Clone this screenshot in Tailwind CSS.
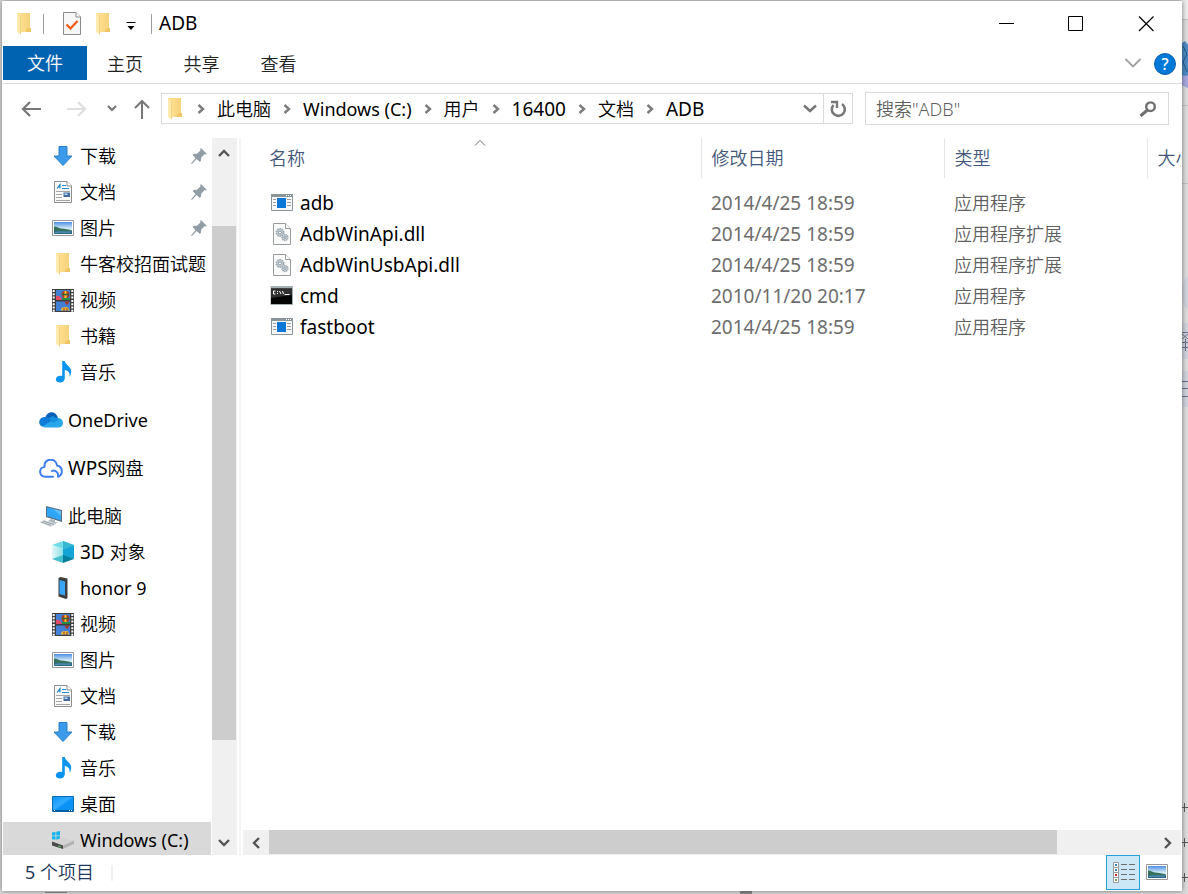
<!DOCTYPE html>
<html lang="zh-CN">
<head>
<meta charset="utf-8">
<meta name="viewport" content="width=device-width, initial-scale=1">
<title>ADB</title>
<script src="https://cdn.jsdelivr.net/npm/@tailwindcss/browser@4"></script>
</head>
<body class="relative flex h-screen overflow-hidden bg-[#dcdcdc] pt-px pr-[6px] pb-[3px] pl-[2px] font-['Noto_Sans','Noto_Sans_CJK_SC',sans-serif] text-[18px] leading-6 font-[350] text-black">

<svg class="absolute size-0" aria-hidden="true">
  <defs>
    <linearGradient id="gFold" x1="0" x2="1"><stop offset="0" stop-color="#ffe394"/><stop offset="1" stop-color="#f7d27c"/></linearGradient>
    <linearGradient id="gSky" x1="0" y1="0" x2="0" y2="1"><stop offset="0" stop-color="#4f8fe6"/><stop offset=".55" stop-color="#d5ecf7"/><stop offset="1" stop-color="#e8f4f4"/></linearGradient>
    <linearGradient id="gBlue" x1="0" y1="0" x2="1" y2="1"><stop offset="0" stop-color="#0a93f5"/><stop offset=".45" stop-color="#33abff"/><stop offset=".55" stop-color="#0a93f5"/><stop offset="1" stop-color="#0a93f5"/></linearGradient>
    <linearGradient id="gCube" x1="0" x2="1"><stop offset="0" stop-color="#e2f8f9"/><stop offset="1" stop-color="#8fe0e6"/></linearGradient>
    <symbol id="folder" viewBox="0 0 16 22"><path d="M4 0h10v15h1v4H4z" fill="#f3cd73"/><path d="M1 0h12.500v16H14v3H5z" fill="url(#gFold)"/><path d="M10 19v-3l3-1h2v4z" fill="#f0c566"/><path d="M1 .500 5 4v17.500L1 19z" fill="#ffe9ab"/><path d="M5 4v17.500l-.800-.500V3.300z" fill="#eecb78"/></symbol>
    <symbol id="down" viewBox="0 0 20 20"><path d="M6 .500h8v9.500h5L10 19.500 1 10h5z" fill="#3b9bea" stroke="#2b7fc8"/></symbol>
    <symbol id="doc" viewBox="0 0 18 22"><path d="M.500.500h12.500l4.500 4.500v16.500h-17z" fill="#fafafa" stroke="#8b8f92"/><path d="M13 .500V5h4.500" fill="#fff" stroke="#8b8f92"/><path d="M3 7.500 6 3.500v4M4.500 6H6M8 4.500h4M8 7.500h7" fill="none" stroke="#1f8bd0" stroke-width="1.200"/><path d="M2 10.500h14M2 13.500h6M2 16.500h6M2 19.500h14" stroke="#a6a6a6"/><path d="M9.500 11.500H16V16H9.500z" fill="#3d6c9c"/><path d="M10.500 12.500h3v1.500h-3z" fill="#bde0f2"/></symbol>
    <symbol id="picture" viewBox="0 0 22 16"><path d="M.500.500h21v15H.500z" fill="#fff" stroke="#979797"/><path d="M2 2h18v12H2z" fill="url(#gSky)"/><path d="M2 6.500c3 0 4 1.500 7 2 4 .500 8 .500 11 2v1H2z" fill="#38715b"/><path d="M2 11h18v3H2z" fill="#276888"/><path d="M3 12.500c4-1 9 0 16-.500" stroke="#6ba0bd" fill="none"/></symbol>
    <symbol id="video" viewBox="0 0 22 23"><path d="M0 0h22v23H0z" fill="#3d3d3d"/><path d="M4 1h14v10H4zM4 12.500h14V22H4z" fill="#4180d5"/><path d="M1.700 1v22M20.300 1v22" stroke="#fff" stroke-width="2" stroke-dasharray="2 1.300"/><ellipse cx="13.500" cy="5.500" rx="4" ry="3.700" fill="#b23a20"/><path d="M12.500 2h2v7h-2z" fill="#ffcb2c"/><path d="M10 5.500h7" stroke="#2f6a38" stroke-width="1.500"/><path d="M4 7c3-1 5 1 6 4H4z" fill="#e04c68"/><path d="M10 9h8v2h-8z" fill="#268b45"/><path d="M12.500 12.500h5l-1.500 3h-2z" fill="#a93727"/><path d="M9 21.500q.500-4 3-3 2-1 4 0l1.500 3z" fill="#f6b62c"/><path d="M12 19v3M15 19v3" stroke="#8b3e30"/></symbol>
    <symbol id="music" viewBox="0 0 18 22"><path d="M8.200 0h2.600c.500 4 6.700 5.500 6.400 11-.1 2-1 4-1.700 5 .500-4-.500-6-4.700-7v8c0 6-9 5.500-9 1.500 0-3.500 3.700-4.500 6.400-3.500z" fill="#0a94ee"/></symbol>
    <symbol id="onedrive" viewBox="0 0 24 16"><path d="M6 6C9-2 17-1 19 6l-6 5z" fill="#0561b8"/><path d="M5 15C-2 14-1 5 6 5c3 0 5 1 8 3.500L6 15z" fill="#0f7bd6"/><path d="M3 14.500 18 6c7-1 8 9 2 9.500H6z" fill="#28a8ea"/><path d="m10 6 4-2 6 4-6 3z" fill="#1490df"/></symbol>
    <symbol id="wps" viewBox="0 0 24 19"><path d="M14 17.800H6.500C-.500 17.500-.500 8.500 5.500 8 4.500-1 17-2 18 6.500c6 1 6.500 9.500 1 11.200 1-4-3-7.500-6-5.700" fill="none" stroke="#3d7df2" stroke-width="2" stroke-linecap="round" stroke-linejoin="round"/></symbol>
    <symbol id="pc" viewBox="0 0 24 21"><path d="m7 0 16 4v12L7 11z" fill="#596e7d"/><path d="m8 1.300 14 3.500v9.700L8 10z" fill="#2fa5f5"/><path d="m14 3 8 2v5z" fill="#62bdff"/><path d="m12 13 4 1v2h3l-3 2-7-3z" fill="#aeb9bf"/><path d="m0 16 5-2 12 4-5 3z" fill="#d9dfe3"/><path d="m2 16 10 3.500M4 15l11 3.500" stroke="#929ea6"/></symbol>
    <symbol id="cube" viewBox="0 0 22 22"><path d="m11 0 11 4-11 4L0 4z" fill="#72dce8"/><path d="m11 0 11 4-11 4z" fill="#35b8cf"/><path d="m0 4 11 4v7L0 18z" fill="url(#gCube)"/><path d="m22 4-11 4v7l11 3z" fill="#12a4d5"/><path d="m0 18 11-4v8z" fill="#45c0ce"/><path d="m22 18-11-4v8z" fill="#067f9b"/></symbol>
    <symbol id="phone" viewBox="0 0 11 22"><path d="M1 1 3 0l7 1.500V21l-1.500 1L1 19.500z" fill="#3e3e3e"/><path d="m2 3 5.500 1.500v14L2 17z" fill="#37a6f8"/></symbol>
    <symbol id="desktop" viewBox="0 0 22 16"><path d="M.500.500h21v15H.500z" fill="url(#gBlue)" stroke="#086bb6"/><path d="M1 14h20v1.500H1z" fill="#075a9e"/><path d="M2 14.500h1M17 14.500h1M19 14.500h1" stroke="#fff"/></symbol>
    <symbol id="drive" viewBox="0 0 22 18"><path d="M0 1.500 3.500 1v3.500H0zM4.300.800 8 0v4.500H4.300zM0 5.300h3.500v3.500L0 8.300zM4.300 5.300H8v4l-3.700-.500z" fill="#11b4ee"/><path d="m0 10.500 9-3.500L22 9.500l-11 5z" fill="#d3d3d3"/><path d="m0 10.500 11 4v3.500L0 14.500z" fill="#4a4a4a"/><path d="m11 14.500 11-5v3.500l-11 5z" fill="#b4b4b4"/><path d="m6 14.500 3 1v1l-3-1z" fill="#54cf5a"/></symbol>
    <symbol id="pin" viewBox="0 0 16 16"><path d="m10 0 6 6-1.500.500-1-.500-3.500 4c.500 1.500 0 3-1 4L5.500 11 1 16l-1-.500L4.500 10 1.500 7c1-1 2.500-1.500 4-1l4-3.500-.500-1z" fill="#929ea6"/></symbol>
    <symbol id="app" viewBox="0 0 22 17"><path d="M.500.500h21v16H.500z" fill="#f7f7f7" stroke="#89949b"/><path d="M0 0h22v3H0z" fill="#89949b"/><path d="M15 1.500h1M17 1.500h1M19 1.500h1" stroke="#fff"/><path d="M6 4h9v10H6z" fill="#0b78d9"/><path d="M2 5.500h3M2 8.500h3M2 11.500h3M16 5.500h4M16 8.500h4M16 11.500h4" stroke="#9b9b9b"/></symbol>
    <symbol id="dll" viewBox="0 0 18 22"><path d="M.500.500h12l5 5v16H.500z" fill="#fafafa" stroke="#969b9e"/><path d="M12.500.500v5h5" fill="#fff" stroke="#969b9e"/><circle cx="7" cy="9.500" r="3.500" fill="#dce3e6" stroke="#98a5ad" stroke-width="2" stroke-dasharray="1.500 .700"/><circle cx="7" cy="9.500" r="1.500" fill="#fff" stroke="#7f909b"/><circle cx="12" cy="14.500" r="2.800" fill="#dce3e6" stroke="#98a5ad" stroke-width="1.700" stroke-dasharray="1.300 .600"/><circle cx="12" cy="14.500" r="1" fill="#fff" stroke="#7f909b"/></symbol>
    <symbol id="cmd" viewBox="0 0 23 19"><path d="M0 0h22.500v19H0z" fill="#a5b0b5"/><path d="M.500 2.500h21V18H.500z" fill="#050505"/><path d="M.500 2.500h21V9L.500 12z" fill="#303030"/><path d="M5 5H3v3h2M7 5v1M7 7v1M9 5l1.500 3M12 5l1 3M14 8.500h5" stroke="#fff" fill="none"/></symbol>
    <symbol id="chev" viewBox="0 0 8 10"><path d="m1.500 1 4.500 4-4.500 4" fill="none" stroke="#7c7c7c" stroke-width="2.400"/></symbol>
  </defs>
</svg>

<!-- strips of the desktop that show around the window -->
<svg class="absolute top-0 right-0 h-[894px] w-[6px]" viewBox="0 0 6 894" aria-hidden="true">
  <path d="M0 0h6v19H0z" fill="#ededed"/><path d="M0 19.500h6M0 105.500h6M0 183.500h6" stroke="#c3c3c3"/>
  <path d="M0 43 3 41l3 4v43l-6-3z" fill="#4d8ac4"/><path d="m1 46 4 8-4 8 4 10" stroke="#235985" fill="none"/><path d="M0 75q4 2 6 0v13l-6-3z" fill="#a8a9de"/>
  <path d="M6 277q-6 2-6 16t6 16zM0 323h6v36H0zM0 371h6v36H0z" fill="#cfd3dc"/>
  <path d="M0 332.500h6M0 334l6 5M6 334l-6 5M0 342.500h6M0 347.500h6M3.500 339v12M0 381.500h6M0 388.500h6M0 396.500h6" stroke="#6c7190" fill="none"/>
  <path d="M0 807.500h6M2.500 803v9M0 842.500h6M2.500 838v9M0 877.500h6M2.500 873v9" stroke="#5b5b5b"/>
</svg>
<svg class="absolute bottom-0 left-[45px] h-[3px] w-[710px]" viewBox="0 0 710 3" aria-hidden="true"><path d="M0 1h22v1H0zM695 0h12v3h-12z" fill="#8a8a8a"/></svg>

<main class="relative flex min-w-0 flex-1 flex-col bg-white pl-px shadow-[0_0_5px_rgba(0,0,0,0.5)]">
  <header class="flex h-[45px] shrink-0 items-center">
    <svg class="ml-[13px] h-[22px] w-4"><use href="#folder"/></svg>
    <span class="ml-[11px] h-5 w-px bg-[#9a9a9a]"></span>
    <button class="ml-[19px]" aria-label="属性"><svg class="h-[23px] w-[18px]" viewBox="0 0 18 23"><path d="M.500.500h12.500l4.500 4.500v17.500H.500z" fill="#f7f7f7" stroke="#8b8b8b"/><path d="M13 .500V5h4.500" fill="#fff" stroke="#8b8b8b"/><path d="m3.500 12.500 4 4 7-7.500" fill="none" stroke="#f2570f" stroke-width="2.200"/></svg></button>
    <button class="ml-[14px]" aria-label="新建文件夹"><svg class="h-[22px] w-4"><use href="#folder"/></svg></button>
    <button class="ml-[15px]" aria-label="自定义快速访问工具栏"><svg class="mt-1 h-2 w-[10px]" viewBox="0 0 10 8"><path d="M.500.500h9" stroke="#000"/><path d="M1.500 4h7L5 8z"/></svg></button>
    <span class="ml-[15px] h-5 w-px bg-[#9a9a9a]"></span>
    <h1 class="ml-[7px] pb-[2px] text-[19px] font-normal">ADB</h1>
    <div class="mr-px ml-auto flex h-full">
      <button class="flex w-[70px] items-center justify-center" aria-label="最小化"><svg class="size-4" viewBox="0 0 16 16"><path d="M1 7.500h15" stroke="#000"/></svg></button>
      <button class="flex w-[70px] items-center justify-center" aria-label="最大化"><svg class="size-4" viewBox="0 0 16 16"><path d="M.500.500h14v14H.500z" fill="none" stroke="#000"/></svg></button>
      <button class="flex w-[70px] items-center justify-center" aria-label="关闭"><svg class="size-4" viewBox="0 0 16 16"><path d="m1 .500 14.500 14.500M15.500.500 1 15" stroke="#000" stroke-width="1.200"/></svg></button>
    </div>
  </header>

  <nav class="flex h-[38px] shrink-0 border-b border-[#dadbdc] text-[#222]">
    <button class="mb-[3px] w-[84px] bg-[#0063b1] text-white">文件</button>
    <button class="w-[76px] pb-px">主页</button>
    <button class="w-[77px] pb-px">共享</button>
    <button class="w-[77px] pb-px">查看</button>
    <button class="mr-3 mb-[3px] ml-auto" aria-label="展开功能区"><svg class="h-[10px] w-[18px]" viewBox="0 0 18 10"><path d="m1.500 1 7.500 7.500L16.500 1" fill="none" stroke="#a0a0a0" stroke-width="1.800"/></svg></button>
    <button class="mt-[7px] mr-[6px] flex size-[22px] items-center justify-center rounded-full border border-[#0f5fae] bg-[#0078d7] text-base leading-none font-medium text-white" aria-label="帮助">?</button>
  </nav>

  <section class="flex h-[49px] shrink-0 items-center pr-[13px]" aria-label="导航">
    <button class="ml-[18px]" aria-label="后退"><svg class="h-4 w-5" viewBox="0 0 20 16"><path d="M20 8H2m7-7L2 8l7 7" fill="none" stroke="#777" stroke-width="2.200"/></svg></button>
    <button class="ml-[26px]" aria-label="前进"><svg class="h-4 w-5" viewBox="0 0 20 16"><path d="M0 8h18m-7-7 7 7-7 7" fill="none" stroke="#dedede" stroke-width="2.200"/></svg></button>
    <button class="ml-5" aria-label="最近位置"><svg class="h-[7px] w-[10px]" viewBox="0 0 10 7"><path d="m1 1 4 4 4-4" fill="none" stroke="#777" stroke-width="2.200"/></svg></button>
    <button class="ml-[17px]" aria-label="上移"><svg class="h-5 w-4" viewBox="0 0 16 20"><path d="M8 20V2M1 9l7-7 7 7" fill="none" stroke="#777" stroke-width="2"/></svg></button>
    <div class="ml-[11px] flex h-[31px] min-w-0 flex-1 items-center border border-[#d9d9d9]">
      <svg class="ml-[5px] h-[22px] w-4 shrink-0"><use href="#folder"/></svg>
      <div class="ml-[14px] flex min-w-0 items-center gap-3 overflow-hidden whitespace-nowrap">
        <svg class="h-[10px] w-2 shrink-0"><use href="#chev"/></svg><button>此电脑</button>
        <svg class="h-[10px] w-2 shrink-0"><use href="#chev"/></svg><button class="font-normal">Windows (C:)</button>
        <svg class="h-[10px] w-2 shrink-0"><use href="#chev"/></svg><button>用户</button>
        <svg class="h-[10px] w-2 shrink-0"><use href="#chev"/></svg><button class="text-[19px] font-normal">16400</button>
        <svg class="h-[10px] w-2 shrink-0"><use href="#chev"/></svg><button>文档</button>
        <svg class="h-[10px] w-2 shrink-0"><use href="#chev"/></svg><button class="text-[19px] font-normal">ADB</button>
      </div>
      <button class="mr-[6px] ml-auto" aria-label="以前的位置"><svg class="h-[9px] w-[14px]" viewBox="0 0 14 9"><path d="m1 1.500 6 5.500 6-5.500" fill="none" stroke="#777" stroke-width="2.400"/></svg></button>
      <button class="flex h-full w-[29px] items-center justify-center border-l border-[#d9d9d9]" aria-label="刷新"><svg class="h-[18px] w-[17px]" viewBox="0 0 17 18"><path d="M12 4a6.500 6.500 0 1 1-8.500 1" fill="none" stroke="#777" stroke-width="2.600"/><path d="M1 2h6v6" fill="none" stroke="#777" stroke-width="2.400"/></svg></button>
    </div>
    <label class="ml-3 flex h-[33px] w-[304px] items-center border border-[#d9d9d9] pr-[11px] pl-[10px]">
      <input class="min-w-0 flex-1 bg-transparent font-normal outline-none placeholder:font-[350] placeholder:text-[#5f5f5f]" type="text" placeholder="搜索&quot;ADB&quot;" aria-label="搜索">
      <svg class="h-4 w-[18px]" viewBox="0 0 18 16"><circle cx="11.500" cy="5.700" r="4.300" fill="none" stroke="#6f6f6f" stroke-width="2.400"/><path d="m8.500 9-7 6" stroke="#6f6f6f" stroke-width="3"/></svg>
    </label>
  </section>

  <div class="flex min-h-0 flex-1 pt-[5px]">
    <ul class="w-[208px] shrink-0 overflow-hidden whitespace-nowrap">
      <li class="flex h-9 items-center pl-12"><svg class="mr-[5px] size-6 p-[2px]"><use href="#down"/></svg>下载<svg class="mr-[4px] ml-auto size-4"><use href="#pin"/></svg></li>
      <li class="flex h-9 items-center pl-12"><svg class="mr-[5px] h-[22px] w-6"><use href="#doc"/></svg>文档<svg class="mr-[4px] ml-auto size-4"><use href="#pin"/></svg></li>
      <li class="flex h-9 items-center pl-12"><svg class="mr-[5px] h-4 w-6"><use href="#picture"/></svg>图片<svg class="mr-[4px] ml-auto size-4"><use href="#pin"/></svg></li>
      <li class="flex h-9 items-center pl-12"><svg class="mr-[5px] h-[22px] w-6 shrink-0"><use href="#folder"/></svg>牛客校招面试题</li>
      <li class="flex h-9 items-center pl-12"><svg class="mr-[5px] h-[23px] w-6"><use href="#video"/></svg>视频</li>
      <li class="flex h-9 items-center pl-12"><svg class="mr-[5px] h-[22px] w-6"><use href="#folder"/></svg>书籍</li>
      <li class="flex h-9 items-center pl-12"><svg class="mr-[5px] h-[22px] w-6"><use href="#music"/></svg>音乐</li>
      <li class="mt-3 flex h-9 items-center pl-9"><svg class="mr-[5px] h-4 w-6"><use href="#onedrive"/></svg><span class="font-normal">OneDrive</span></li>
      <li class="mt-3 flex h-9 items-center pl-9"><svg class="mr-[5px] h-[19px] w-6"><use href="#wps"/></svg><span><span class="text-[19px] font-normal">WPS</span>网盘</span></li>
      <li class="mt-3 flex h-9 items-center pl-9"><svg class="mr-[5px] h-[21px] w-6"><use href="#pc"/></svg>此电脑</li>
      <li class="flex h-9 items-center pl-12"><svg class="mr-[5px] h-[22px] w-6"><use href="#cube"/></svg><span><span class="text-[19px] font-normal">3D </span>对象</span></li>
      <li class="flex h-9 items-center pl-12"><svg class="mr-[5px] h-[22px] w-6"><use href="#phone"/></svg><span class="font-normal">honor 9</span></li>
      <li class="flex h-9 items-center pl-12"><svg class="mr-[5px] h-[23px] w-6"><use href="#video"/></svg>视频</li>
      <li class="flex h-9 items-center pl-12"><svg class="mr-[5px] h-4 w-6"><use href="#picture"/></svg>图片</li>
      <li class="flex h-9 items-center pl-12"><svg class="mr-[5px] h-[22px] w-6"><use href="#doc"/></svg>文档</li>
      <li class="flex h-9 items-center pl-12"><svg class="mr-[5px] size-6 p-[2px]"><use href="#down"/></svg>下载</li>
      <li class="flex h-9 items-center pl-12"><svg class="mr-[5px] h-[22px] w-6"><use href="#music"/></svg>音乐</li>
      <li class="flex h-9 items-center pl-12"><svg class="mr-[5px] h-4 w-6"><use href="#desktop"/></svg>桌面</li>
      <li class="flex h-9 items-center bg-[#d9d9d9] pl-12"><svg class="mr-[5px] h-[18px] w-6"><use href="#drive"/></svg><span class="font-normal">Windows (C:)</span></li>
    </ul>
    <div class="ml-px flex w-[25px] shrink-0 flex-col bg-[#f0f0f0] pr-px">
      <button class="flex h-[30px] shrink-0 items-center justify-center" aria-label="向上滚动"><svg class="h-2 w-3" viewBox="0 0 12 8"><path d="m1 7 5-5 5 5" fill="none" stroke="#555" stroke-width="2.400"/></svg></button>
      <div class="flex flex-1 flex-col"><div class="grow-58"></div><div class="grow-514 bg-[#cdcdcd]"></div><div class="grow-90"></div></div>
      <button class="flex h-[25px] shrink-0 items-center justify-center" aria-label="向下滚动"><svg class="h-2 w-3" viewBox="0 0 12 8"><path d="m1 1 5 5 5-5" fill="none" stroke="#555" stroke-width="2.400"/></svg></button>
    </div>
    <div class="mr-[2px] ml-[2px] w-[2px] shrink-0 bg-[#f5f5f5]"></div>

    <section class="flex min-w-0 flex-1 flex-col pr-px" aria-label="文件">
      <table class="w-full table-fixed text-left whitespace-nowrap">
        <colgroup><col><col class="w-[243px]"><col class="w-[203px]"><col class="w-[34px]"></colgroup>
        <thead class="text-[#43587a]">
          <tr class="h-10">
            <th class="relative border-r border-[#e5e5e5] pl-[26px] font-[350]">名称<svg class="absolute top-[2px] left-[calc(50%+2px)] h-[6px] w-3" viewBox="0 0 12 6"><path d="m1 5.500 5-5 5 5" fill="none" stroke="#666"/></svg></th>
            <th class="border-r border-[#e5e5e5] pl-[10px] font-[350]">修改日期</th>
            <th class="border-r border-[#e5e5e5] pl-[10px] font-[350]">类型</th>
            <th class="overflow-hidden pl-[10px] font-[350]">大小</th>
          </tr>
        </thead>
        <tbody class="text-[#6d6d6d]">
          <tr class="h-[9px]"><td colspan="4" class="p-0"></td></tr>
          <tr class="h-[31px]"><td class="pl-[27px] text-[19px] font-normal text-black"><div class="flex items-center"><svg class="mr-[6px] h-[17px] w-6"><use href="#app"/></svg>adb</div></td><td class="pl-[10px] text-[19px] font-normal">2014/4/25 18:59</td><td class="pl-[10px] text-[#5f5f5f]">应用程序</td><td></td></tr>
          <tr class="h-[31px]"><td class="pl-[27px] text-[19px] font-normal text-black"><div class="flex items-center"><svg class="mr-[6px] h-[22px] w-6"><use href="#dll"/></svg>AdbWinApi.dll</div></td><td class="pl-[10px] text-[19px] font-normal">2014/4/25 18:59</td><td class="pl-[10px] text-[#5f5f5f]">应用程序扩展</td><td></td></tr>
          <tr class="h-[31px]"><td class="pl-[27px] text-[19px] font-normal text-black"><div class="flex items-center"><svg class="mr-[6px] h-[22px] w-6"><use href="#dll"/></svg>AdbWinUsbApi.dll</div></td><td class="pl-[10px] text-[19px] font-normal">2014/4/25 18:59</td><td class="pl-[10px] text-[#5f5f5f]">应用程序扩展</td><td></td></tr>
          <tr class="h-[31px]"><td class="pl-[27px] text-[19px] font-normal text-black"><div class="flex items-center"><svg class="mr-[6px] h-[19px] w-6"><use href="#cmd"/></svg>cmd</div></td><td class="pl-[10px] text-[19px] font-normal">2010/11/20 20:17</td><td class="pl-[10px] text-[#5f5f5f]">应用程序</td><td></td></tr>
          <tr class="h-[31px]"><td class="pl-[27px] text-[19px] font-normal text-black"><div class="flex items-center"><svg class="mr-[6px] h-[17px] w-6"><use href="#app"/></svg>fastboot</div></td><td class="pl-[10px] text-[19px] font-normal">2014/4/25 18:59</td><td class="pl-[10px] text-[#5f5f5f]">应用程序</td><td></td></tr>
        </tbody>
      </table>
      <div class="mt-auto flex h-[25px] shrink-0 bg-[#f0f0f0]">
        <button class="flex w-[26px] items-center justify-center" aria-label="向左滚动"><svg class="h-3 w-2" viewBox="0 0 8 12"><path d="M7 1 2 6l5 5" fill="none" stroke="#555" stroke-width="2.400"/></svg></button>
        <div class="flex flex-1 pb-px"><div class="grow-788 bg-[#cdcdcd]"></div><div class="grow-97"></div></div>
        <button class="flex w-[27px] items-center justify-center" aria-label="向右滚动"><svg class="h-3 w-2" viewBox="0 0 8 12"><path d="m1 1 5 5-5 5" fill="none" stroke="#555" stroke-width="2.400"/></svg></button>
      </div>
    </section>
  </div>

  <footer class="flex h-9 shrink-0 items-center pl-[22px] text-[#1e395b]">
    <p class="pb-[2px]"><span class="font-normal">5</span> 个项目</p>
    <span class="ml-[17px] h-4 w-[2px] bg-[#f0f0f0]"></span>
    <button class="mr-[6px] ml-auto flex h-[35px] w-[34px] items-center justify-center self-start border border-[#26a0da] bg-[#cce8f6] pl-[2px]" aria-label="详细信息">
      <svg class="h-[21px] w-[22px]" viewBox="0 0 22 21"><path d="M.500.500h5v5h-5zM.500 5.500h5v5h-5zM.500 10.500h5v5h-5zM.500 15.500h5v5h-5z" fill="#fff" stroke="#999"/><path d="M2 2h2v2H2zM2 7h2v2H2z" fill="#3580b4"/><path d="M2 12h2v2H2z" fill="#b72720"/><path d="M2 17h2v2H2z" fill="#79a060"/><path d="M8 2.500h6M16 2.500h6M8 7.500h6M16 7.500h6M8 12.500h6M16 12.500h6M8 17.500h6M16 17.500h6" stroke="#6d6d6d"/></svg>
    </button>
    <button class="mr-[14px] pb-[2px]" aria-label="大缩略图"><svg class="h-4 w-[22px]"><use href="#picture"/></svg></button>
  </footer>
</main>
</body>
</html>
